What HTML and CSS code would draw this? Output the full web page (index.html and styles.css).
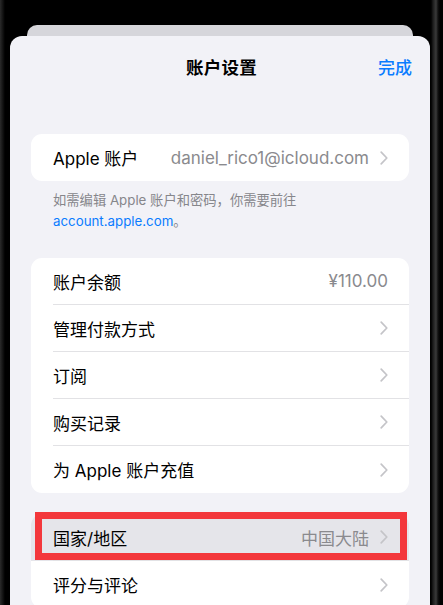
FILE: index.html
```html
<!DOCTYPE html>
<html lang="zh-CN">
<head>
<meta charset="utf-8">
<title>账户设置</title>
<link rel="stylesheet" href="styles.css">
</head>
<body>
<div class="screen">
  <div class="back-card"></div>
  <div class="sheet">
    <header class="nav">
      <span class="nav-side"></span>
      <h1 class="nav-title">账户设置</h1>
      <span class="nav-side nav-done">完成</span>
    </header>

    <section class="card card-account">
      <div class="row">
        <div class="row-inner last">
          <span class="label">Apple 账户</span>
          <span class="value">daniel_rico1@icloud.com</span>
          <svg class="chev" viewBox="0 0 8 14" width="8" height="14"><polyline points="1.2,1.2 6.8,7 1.2,12.8"/></svg>
        </div>
      </div>
    </section>
    <p class="footnote">如需编辑 Apple 账户和密码，你需要前往<br><span class="link">account.apple.com</span>。</p>

    <section class="card card-list">
      <div class="row"><div class="row-inner"><span class="label">账户余额</span><span class="value value-plain">¥110.00</span></div></div>
      <div class="row"><div class="row-inner"><span class="label">管理付款方式</span><svg class="chev" viewBox="0 0 8 14" width="8" height="14"><polyline points="1.2,1.2 6.8,7 1.2,12.8"/></svg></div></div>
      <div class="row"><div class="row-inner"><span class="label">订阅</span><svg class="chev" viewBox="0 0 8 14" width="8" height="14"><polyline points="1.2,1.2 6.8,7 1.2,12.8"/></svg></div></div>
      <div class="row"><div class="row-inner"><span class="label">购买记录</span><svg class="chev" viewBox="0 0 8 14" width="8" height="14"><polyline points="1.2,1.2 6.8,7 1.2,12.8"/></svg></div></div>
      <div class="row"><div class="row-inner last"><span class="label">为 Apple 账户充值</span><svg class="chev" viewBox="0 0 8 14" width="8" height="14"><polyline points="1.2,1.2 6.8,7 1.2,12.8"/></svg></div></div>
    </section>

    <section class="card card-region">
      <div class="row row-active">
        <div class="row-inner"><span class="label">国家/地区</span><span class="value">中国大陆</span><svg class="chev" viewBox="0 0 8 14" width="8" height="14"><polyline points="1.2,1.2 6.8,7 1.2,12.8"/></svg></div>
        <div class="highlight-box"></div>
      </div>
      <div class="row"><div class="row-inner last"><span class="label">评分与评论</span><svg class="chev" viewBox="0 0 8 14" width="8" height="14"><polyline points="1.2,1.2 6.8,7 1.2,12.8"/></svg></div></div>
    </section>
  </div>
</div>
</body>
</html>
```

FILE: styles.css
```css
* { box-sizing: border-box; }

html, body {
  margin: 0;
  padding: 0;
  height: 100%;
  overflow: hidden;
}

body {
  background: #000;
  font-family: Inter, "Noto Sans CJK SC", "Noto Sans", sans-serif;
  color: #000;
}

.screen {
  width: 443px;
  height: 605px;
  overflow: hidden;
  background:
    linear-gradient(90deg, #2b2b2b 0, #111 3px, #000 5px, #000 431px, #1c1c1c 433px, #3a3a3a 436px, #111 438px, #000 440px);
  padding-top: 25px;
}

.back-card {
  margin-left: 27px;
  width: 386px;
  height: 11px;
  background: #d6d6db;
  border-radius: 10px 10px 0 0;
}

.sheet {
  margin-left: 10px;
  width: 420px;
  height: 600px;
  background: #f2f2f7;
  border-radius: 12px 12px 0 0;
  padding: 0 21px;
}

.nav {
  height: 60px;
  display: flex;
  align-items: center;
  justify-content: space-between;
}

.nav-side {
  width: 70px;
  font-size: 17px;
}

.nav-title {
  margin: 0;
  font-size: 17.5px;
  font-weight: 600;
  letter-spacing: 0.2px;
}

.nav-done {
  text-align: right;
  color: #0a7cff;
  font-weight: 500;
  margin-right: -3px;
}

.card {
  background: #fff;
  border-radius: 11px;
}

.card-account { margin-top: 38px; }

.row {
  padding-left: 22px;
  position: relative;
}

.row-inner {
  height: 47px;
  display: flex;
  align-items: center;
  padding-right: 21px;
  border-bottom: 1px solid #e2e2e5;
  font-size: 17px;
}

.row-inner.last { border-bottom: none; }

.label {
  flex: 1;
  white-space: nowrap;
}

.value {
  color: #8a8a8e;
  margin-right: 11px;
  white-space: nowrap;
}

.value-plain { margin-right: 0; }

.chev {
  flex: none;
  fill: none;
  stroke: #c4c4c8;
  stroke-width: 1.7;
  stroke-linecap: round;
  stroke-linejoin: round;
}

.footnote {
  margin: 9px 0 0;
  padding-left: 22px;
  font-size: 13.3px;
  line-height: 21px;
  color: #86868b;
}

.link { color: #0a7cff; }

.card-list { margin-top: 26px; }

.card-region { margin-top: 21px; }

.row-active {
  background: #e5e5ea;
  border-radius: 11px 11px 0 0;
}

.highlight-box {
  position: absolute;
  left: 4px;
  top: -2px;
  width: 372px;
  height: 48px;
  border: 7px solid #f3373b;
  pointer-events: none;
}
```
